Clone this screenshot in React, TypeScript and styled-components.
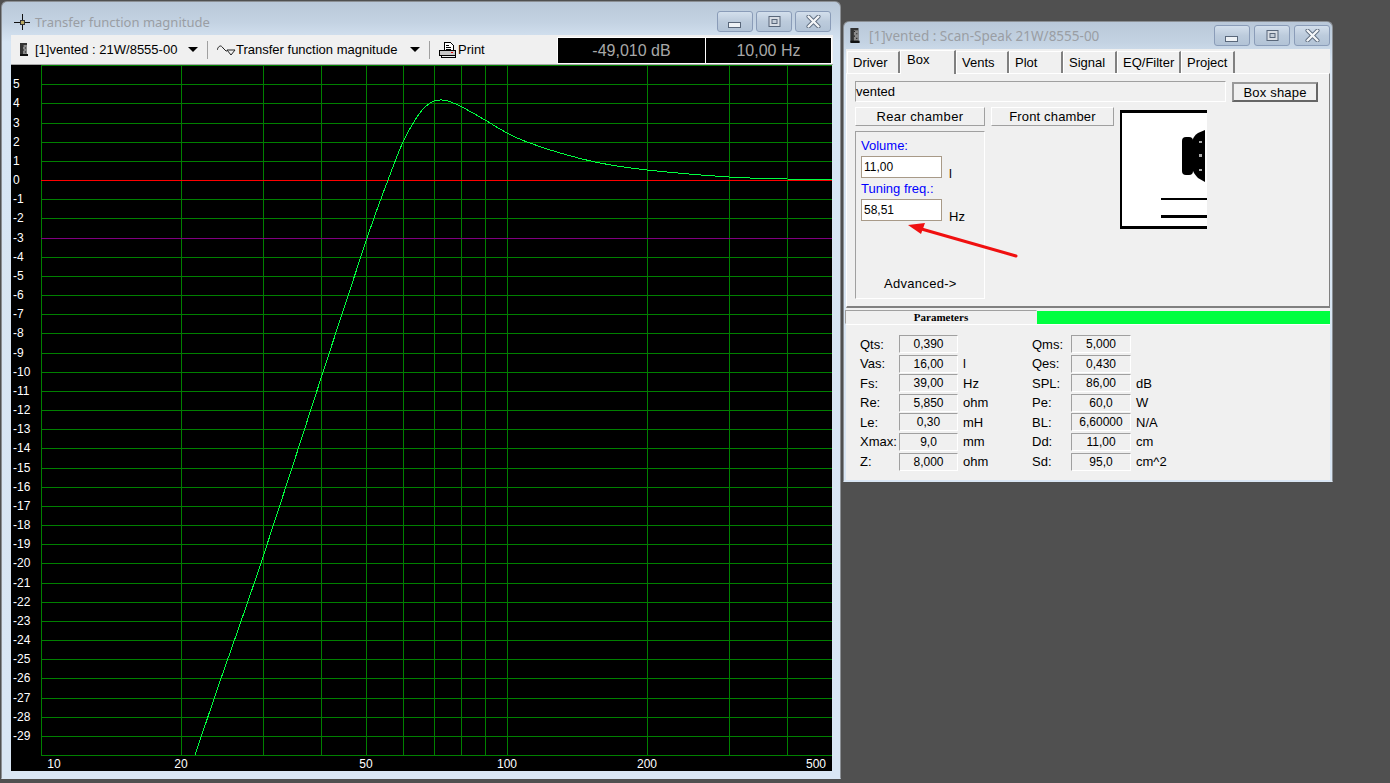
import React from "react";
import styled, { createGlobalStyle } from "styled-components";

const Global = createGlobalStyle`
  html, body { margin: 0; padding: 0; height: 100%; background: #505050; overflow: hidden; }
  body { font-family: "Liberation Sans", Arial, sans-serif; font-size: 13px; color: #000; }
`;

const Desktop = styled.div`
  position: relative;
  width: 1390px;
  height: 783px;
  background: #505050;
  overflow: hidden;
`;

const Win = styled.div<{ $l: number; $t: number; $w: number; $h: number; $side: number; $right: number; $bottom: number }>`
  position: absolute;
  left: ${p => p.$l}px;
  top: ${p => p.$t}px;
  width: ${p => p.$w}px;
  height: ${p => p.$h}px;
  box-sizing: border-box;
  display: flex;
  flex-direction: column;
  padding: 0 ${p => p.$right}px ${p => p.$bottom}px ${p => p.$side}px;
  border: 1px solid #8b8f94;
  border-bottom-color: #d9e6f4;
  border-radius: 6px 6px 0 0;
  background: linear-gradient(180deg, #b9c8d9 0px, #c3d2e2 20px, #d7e5f3 40px, #d9e6f4 100%);
`;

const TitleBar = styled.div<{ $h: number; $pt: number; $pl: number; $pr: number; $gap: number }>`
  height: ${p => p.$h}px;
  box-sizing: border-box;
  padding: ${p => p.$pt}px ${p => p.$pr}px 0 ${p => p.$pl}px;
  flex: none;
  display: flex;
  align-items: center;
  gap: ${p => p.$gap}px;
`;

const TitleText = styled.span<{ $size: number }>`
  font-family: "Noto Sans", sans-serif;
  font-size: ${p => p.$size}px;
  color: #9a9ea4;
  white-space: nowrap;
`;

const Controls = styled.div<{ $gap: number }>`
  margin-left: auto;
  display: flex;
  gap: ${p => p.$gap}px;
`;

const Ctl = styled.div`
  width: 36px;
  height: 21px;
  box-sizing: border-box;
  border: 1px solid #8a9cb8;
  border-radius: 3px;
  background: linear-gradient(180deg, #d3dfec 0%, #bccbdc 50%, #b2c3d6 100%);
  display: flex;
  align-items: center;
  justify-content: center;
`;

const Toolbar = styled.div`
  height: 30px;
  flex: none;
  background: #f0f0f0;
  display: flex;
  align-items: center;
  font-size: 13px;
  white-space: nowrap;
  border-bottom: 1px solid #a8a8a8;
  box-sizing: border-box;
  padding-left: 9px;
`;

const ToolLabel = styled.span<{ $w: number; $ml?: number }>`
  width: ${p => p.$w}px;
  margin-left: ${p => p.$ml ?? 0}px;
  flex: none;
  display: inline-block;
`;

const Caret = styled.span`
  width: 0;
  height: 0;
  flex: none;
  border-left: 5px solid transparent;
  border-right: 5px solid transparent;
  border-top: 5px solid #000;
`;

const Sep = styled.span<{ $l: number; $r: number }>`
  width: 1px;
  height: 18px;
  flex: none;
  background: #a0a0a0;
  margin: 0 ${p => p.$r}px 0 ${p => p.$l}px;
`;

const PrintLabel = styled.span`
  margin-left: 1px;
`;

const Readouts = styled.div`
  margin-left: auto;
  margin-right: 1px;
  display: flex;
  height: 27px;
  align-self: flex-start;
  margin-top: 2px;
  gap: 1px;
  background: #fff;
  padding: 0 1px;
`;

const Readout = styled.div<{ $w: number }>`
  width: ${p => p.$w}px;
  background: #000;
  color: #a8a8a8;
  font-size: 16px;
  margin: 1px 0;
  display: flex;
  align-items: center;
  justify-content: center;
`;

const ChartSvg = styled.svg`
  display: block;
  flex: none;
  background: #000;
`;

const ChartLabel = styled.text`
  font-family: "Liberation Sans", sans-serif;
  font-size: 12px;
  fill: #fff;
`;

const Client = styled.div`
  flex: 1;
  background: #f0f0f0;
  display: flex;
  flex-direction: column;
  min-height: 0;
`;

const Tabs = styled.div`
  display: flex;
  height: 24px;
  flex: none;
  padding-left: 1px;
  align-items: flex-end;
`;

const Tab = styled.div<{ $w: number; $active?: boolean }>`
  width: ${p => p.$w}px;
  height: ${p => (p.$active ? 24 : 22)}px;
  box-sizing: border-box;
  flex: none;
  border-left: 1px solid #fff;
  border-top: 1px solid #fff;
  border-right: 2px solid #808080;
  background: #f0f0f0;
  font-size: 13px;
  padding: ${p => (p.$active ? "1px 0 0 6px" : "3px 0 0 5px")};
  white-space: nowrap;
  margin-bottom: ${p => (p.$active ? -1 : 0)}px;
  position: relative;
  z-index: ${p => (p.$active ? 1 : 0)};
`;

const Panel = styled.div`
  height: 235px;
  flex: none;
  box-sizing: border-box;
  border-top: 1px solid #fff;
  border-left: 1px solid #fff;
  border-right: 1px solid #808080;
  border-bottom: 2px solid #808080;
  padding: 7px 11px 0 8px;
  display: flex;
  flex-direction: column;
`;

const NameRow = styled.div`
  display: flex;
  gap: 6px;
  height: 26px;
  flex: none;
`;

const NameField = styled.div`
  width: 371px;
  height: 21px;
  box-sizing: border-box;
  border: 1px solid;
  border-color: #a0a0a0 #fff #fff #a0a0a0;
  padding: 2px 0 0 0;
  line-height: 16px;
`;

const DefaultBtn = styled.div`
  width: 86px;
  height: 20px;
  margin-top: 1px;
  box-sizing: border-box;
  border: 2px solid #666;
  border-top-color: #999;
  border-left-color: #999;
  text-align: center;
  line-height: 17px;
  letter-spacing: 0.2px;
`;

const Lower = styled.div`
  display: flex;
`;

const LeftCol = styled.div`
  width: 130px;
  flex: none;
  display: flex;
  flex-direction: column;
  gap: 5px;
`;

const PlainBtn = styled.div<{ $w?: number; $ls: number }>`
  width: ${p => (p.$w ? `${p.$w}px` : "100%")};
  height: 19px;
  box-sizing: border-box;
  flex: none;
  border: 1px solid;
  border-color: #fff #a0a0a0 #a0a0a0 #fff;
  text-align: center;
  line-height: 17px;
  letter-spacing: ${p => p.$ls}px;
`;

const Group = styled.div`
  height: 168px;
  box-sizing: border-box;
  border: 1px solid;
  border-color: #a0a0a0 #fff #fff #a0a0a0;
  padding: 6px 0 0 5px;
  display: flex;
  flex-direction: column;
`;

const BlueLabel = styled.div<{ $mt?: number }>`
  color: #0000ff;
  height: 15px;
  line-height: 15px;
  margin-top: ${p => p.$mt ?? 0}px;
  margin-bottom: 3px;
`;

const InputRow = styled.div`
  display: flex;
  gap: 7px;
`;

const NumInput = styled.div`
  width: 81px;
  height: 22px;
  box-sizing: border-box;
  border: 1px solid #a89a88;
  background: #fff;
  padding-left: 2px;
  line-height: 20px;
  font-size: 12px;
`;

const InputUnit = styled.span`
  align-self: flex-end;
  line-height: 15px;
  margin-bottom: -3px;
`;

const Advanced = styled.div`
  margin-top: auto;
  margin-bottom: 7px;
  margin-left: 23px;
  line-height: 15px;
  letter-spacing: 0.3px;
`;

const MidCol = styled.div`
  margin-left: 6px;
  width: 123px;
  flex: none;
`;

const Preview = styled.svg`
  display: block;
  margin: 3px 0 0 6px;
  flex: none;
`;

const Strip = styled.div`
  height: 17px;
  flex: none;
  display: flex;
  align-items: stretch;
  padding-top: 3px;
  box-sizing: border-box;
  border-bottom: 1px solid #fff;
`;

const StripTitle = styled.div`
  width: 192px;
  margin: -1px 0 0 -1px;
  box-sizing: border-box;
  border: 1px solid;
  border-color: #a0a0a0 transparent transparent #a0a0a0;
  font-family: "Liberation Serif", serif;
  font-weight: bold;
  font-size: 11px;
  text-align: center;
  line-height: 13px;
`;

const StripBar = styled.div`
  flex: 1;
  background: #00ff40;
`;

const Params = styled.div`
  display: flex;
  padding: 10px 0 0 14px;
`;

const ParamCol = styled.div`
  display: flex;
  flex-direction: column;
  gap: 1.6px;
  width: 172px;
`;

const ParamRow = styled.div`
  display: flex;
  height: 18px;
  align-items: center;
`;

const ParamName = styled.span`
  width: 39px;
  flex: none;
  white-space: nowrap;
`;

const ParamValue = styled.span<{ $w: number }>`
  width: ${p => p.$w}px;
  flex: none;
  height: 18px;
  box-sizing: border-box;
  border: 1px solid;
  border-color: #a0a0a0 #fff #fff #a0a0a0;
  text-align: center;
  line-height: 16px;
  font-size: 12px;
`;

const ParamUnit = styled.span`
  margin-left: 5px;
  white-space: nowrap;
`;

const Annotation = styled.svg`
  position: absolute;
  left: 900px;
  top: 215px;
  pointer-events: none;
`;

const IconSvg = styled.svg<{ $mt?: number }>`
  flex: none;
  margin-top: ${p => p.$mt ?? 0}px;
`;

const CHART_X = 11;
const CHART_Y = 65;
const vFreq = [41, 181, 263, 321, 366, 403, 434, 461, 485, 507, 647, 729, 787, 832];
const yFor = (v: number) => Math.round(65 + (6 - v) * 19.167);
const yVals = Array.from({ length: 35 }, (_, i) => 5 - i);
const xLabels: [string, number][] = [["10", 54], ["20", 181], ["50", 366], ["100", 507], ["200", 647], ["500", 816]];
const knots = [
  [195, 755], [217, 690], [262, 560], [323, 372], [367, 238], [388, 180],
  [403, 142], [417, 117], [425, 107], [434, 101], [441, 100], [448, 101],
  [462, 107], [485, 120], [507, 133], [527, 142], [560, 153], [600, 163], [647, 170],
  [729, 177], [787, 179], [832, 180],
];

// Catmull-Rom through the read-off points, so the trace has no corners.
const curvePath = knots.map((p, i) => {
  if (i === 0) return `M${p[0]} ${p[1]}`;
  const p0 = knots[Math.max(0, i - 2)];
  const p1 = knots[i - 1];
  const p3 = knots[Math.min(knots.length - 1, i + 1)];
  const c1 = [p1[0] + (p[0] - p0[0]) / 6, p1[1] + (p[1] - p0[1]) / 6];
  const c2 = [p[0] - (p3[0] - p1[0]) / 6, p[1] - (p3[1] - p1[1]) / 6];
  return `C${c1[0]} ${c1[1]} ${c2[0]} ${c2[1]} ${p[0]} ${p[1]}`;
}).join("");

const BookIcon = ({ w = 8, h = 13 }: { w?: number; h?: number }) => (
  <IconSvg width={w} height={h} viewBox="0 0 8 13">
    <rect x="0" y="0" width="7" height="12" fill="#333" />
    <rect x="3" y="2" width="4" height="9" fill="#8a8a8a" />
    <path d="M3 3h1M5 5h1M3 7h1M5 9h1" stroke="#222" />
    <rect x="0" y="11" width="8" height="2" fill="#111" />
  </IconSvg>
);

const Cross = () => (
  <IconSvg width="16" height="16" viewBox="0 0 16 16" shapeRendering="crispEdges">
    <path d="M0 8h16M8 0v16" stroke="#111" />
    <rect x="6" y="6" width="4" height="4" fill="#b8a860" stroke="#333" />
  </IconSvg>
);

const WaveIcon = () => (
  <IconSvg width="19" height="12" viewBox="0 0 19 12">
    <path d="M0 6 C2 1 4 1 6 4 L9 7 H10 M10 6 H18 L14 11 Z" fill="none" stroke="#222" strokeWidth="1" />
  </IconSvg>
);

const PrinterIcon = () => (
  <IconSvg width="18" height="16" viewBox="0 0 18 16" shapeRendering="crispEdges">
    <path d="M5.5 .5h6l3 3v5h-9z" fill="#fff" stroke="#000" />
    <path d="M7 3h3M7 5h5M7 7h5" stroke="#000" />
    <rect x=".5" y="8.5" width="16" height="5" fill="#c8c8c8" stroke="#000" />
    <rect x="12" y="10" width="2" height="1" fill="#e00" />
    <rect x="2.5" y="13.5" width="14" height="2" fill="#eee" stroke="#000" />
  </IconSvg>
);

const MinGlyph = () => (
  <IconSvg width="14" height="8" viewBox="0 0 14 8" $mt={6}>
    <rect x=".5" y="1.5" width="12" height="5" fill="#eef2f6" stroke="#59677a" />
  </IconSvg>
);
const MaxGlyph = () => (
  <IconSvg width="13" height="11" viewBox="0 0 13 11">
    <rect x="1" y="0.5" width="11" height="10" fill="#d8dde4" stroke="#59677a" />
    <rect x="4" y="3.5" width="5" height="4" fill="#c5ced8" stroke="#59677a" />
  </IconSvg>
);
const CloseGlyph = () => (
  <IconSvg width="15" height="13" viewBox="0 0 15 13">
    <path d="M2.5 1.5 L12.5 11.5 M12.5 1.5 L2.5 11.5" stroke="#59677a" strokeWidth="4" strokeLinecap="round" />
    <path d="M2.5 1.5 L12.5 11.5 M12.5 1.5 L2.5 11.5" stroke="#f4f6f8" strokeWidth="2.4" strokeLinecap="round" />
  </IconSvg>
);

const WindowControls = ({ gap }: { gap: number }) => (
  <Controls $gap={gap}>
    <Ctl><MinGlyph /></Ctl>
    <Ctl><MaxGlyph /></Ctl>
    <Ctl><CloseGlyph /></Ctl>
  </Controls>
);

const leftParams = [
  ["Qts:", "0,390", ""], ["Vas:", "16,00", "l"], ["Fs:", "39,00", "Hz"], ["Re:", "5,850", "ohm"],
  ["Le:", "0,30", "mH"], ["Xmax:", "9,0", "mm"], ["Z:", "8,000", "ohm"],
];
const rightParams = [
  ["Qms:", "5,000", ""], ["Qes:", "0,430", ""], ["SPL:", "86,00", "dB"], ["Pe:", "60,0", "W"],
  ["BL:", "6,60000", "N/A"], ["Dd:", "11,00", "cm"], ["Sd:", "95,0", "cm^2"],
];
const tabs: [string, number, boolean?][] = [
  ["Driver", 53], ["Box", 56, true], ["Vents", 53], ["Plot", 54], ["Signal", 54], ["EQ/Filter", 64], ["Project", 54],
];

const gridLines = [...yVals, -30];

const Chart = () => (
  <ChartSvg width={821} height={706} viewBox={`${CHART_X} ${CHART_Y} 821 706`}>
    <g shapeRendering="crispEdges" strokeWidth="1">
      {vFreq.map(x => <line key={x} x1={x + 0.5} x2={x + 0.5} y1={65} y2={755} stroke="#008000" />)}
      <line x1={41} x2={833} y1={65.5} y2={65.5} stroke="#008000" />
      {gridLines.map(v => (
        <line key={v} x1={41} x2={833} y1={yFor(v) + 0.5} y2={yFor(v) + 0.5}
          stroke={v === 0 ? "#ff0000" : v === -3 ? "#800080" : "#008000"} />
      ))}
      <path d={curvePath} fill="none" stroke="#00ff40" />
    </g>
    {yVals.map(v => (
      <ChartLabel key={v} x={13} y={yFor(v) + 4}>{v}</ChartLabel>
    ))}
    {xLabels.map(([t, x]) => (
      <ChartLabel key={t} x={x} y={768} textAnchor="middle">{t}</ChartLabel>
    ))}
  </ChartSvg>
);

const ParamColumn = ({ rows, w }: { rows: string[][]; w: number }) => (
  <ParamCol>
    {rows.map(([n, v, u]) => (
      <ParamRow key={n}>
        <ParamName>{n}</ParamName>
        <ParamValue $w={w}>{v}</ParamValue>
        {u && <ParamUnit>{u}</ParamUnit>}
      </ParamRow>
    ))}
  </ParamCol>
);

export default function App() {
  return (
    <Desktop>
      <Global />
      <Win $l={1} $t={1} $w={840} $h={778} $side={9} $right={7} $bottom={6}>
        <TitleBar $h={33} $pt={6} $pl={3} $pr={2} $gap={5}>
          <Cross />
          <TitleText $size={13}>Transfer function magnitude</TitleText>
          <WindowControls gap={3} />
        </TitleBar>
        <Toolbar>
          <BookIcon />
          <ToolLabel $w={153} $ml={7}>[1]vented : 21W/8555-00</ToolLabel>
          <Caret />
          <Sep $l={9} $r={9} />
          <WaveIcon />
          <ToolLabel $w={174}>Transfer function magnitude</ToolLabel>
          <Caret />
          <Sep $l={9} $r={9} />
          <PrinterIcon />
          <PrintLabel>Print</PrintLabel>
          <Readouts>
            <Readout $w={147}>-49,010 dB</Readout>
            <Readout $w={125}>10,00 Hz</Readout>
          </Readouts>
        </Toolbar>
        <Chart />
      </Win>

      <Win $l={843} $t={21} $w={490} $h={461} $side={2} $right={2} $bottom={1}>
        <TitleBar $h={27} $pt={0} $pl={4} $pr={0} $gap={9}>
          <BookIcon w={10} h={15} />
          <TitleText $size={13.5}>[1]vented : Scan-Speak 21W/8555-00</TitleText>
          <WindowControls gap={4} />
        </TitleBar>
        <Client>
          <Tabs>
            {tabs.map(([t, w, a]) => <Tab key={t} $w={w} $active={a}>{t}</Tab>)}
          </Tabs>
          <Panel>
            <NameRow>
              <NameField>vented</NameField>
              <DefaultBtn>Box shape</DefaultBtn>
            </NameRow>
            <Lower>
              <LeftCol>
                <PlainBtn $ls={0.4}>Rear chamber</PlainBtn>
                <Group>
                  <BlueLabel>Volume:</BlueLabel>
                  <InputRow>
                    <NumInput>11,00</NumInput>
                    <InputUnit>l</InputUnit>
                  </InputRow>
                  <BlueLabel $mt={3}>Tuning freq.:</BlueLabel>
                  <InputRow>
                    <NumInput>58,51</NumInput>
                    <InputUnit>Hz</InputUnit>
                  </InputRow>
                  <Advanced>Advanced-&gt;</Advanced>
                </Group>
              </LeftCol>
              <MidCol>
                <PlainBtn $w={123} $ls={0.15}>Front chamber</PlainBtn>
              </MidCol>
              <Preview width={87} height={119} viewBox="0 0 87 119">
                <rect x="0" y="0" width="87" height="119" fill="#000" />
                <rect x="2" y="3" width="85" height="113" fill="#fff" />
                <rect x="62" y="27" width="11" height="38" rx="4" fill="#000" />
                <path d="M71 34 Q73 26 78 23 L85 20 V72 L78 68 Q73 63 71 56 Z" fill="#000" />
                <rect x="79" y="31" width="3" height="2" fill="#aaa" />
                <rect x="79" y="44" width="3" height="3" fill="#aaa" />
                <rect x="79" y="59" width="3" height="2" fill="#aaa" />
                <rect x="41" y="88" width="46" height="2" fill="#000" />
                <rect x="41" y="105" width="46" height="3" fill="#000" />
              </Preview>
            </Lower>
          </Panel>
          <Strip>
            <StripTitle>Parameters</StripTitle>
            <StripBar />
          </Strip>
          <Params>
            <ParamColumn rows={leftParams} w={59} />
            <ParamColumn rows={rightParams} w={60} />
          </Params>
        </Client>
      </Win>

      <Annotation width={125} height={50} viewBox="0 0 125 50">
        <path d="M116 41 L18 13" stroke="#f01010" strokeWidth="3" strokeLinecap="round" />
        <path d="M8 10 L25 8 L21 19 Z" fill="#f01010" />
      </Annotation>
    </Desktop>
  );
}
